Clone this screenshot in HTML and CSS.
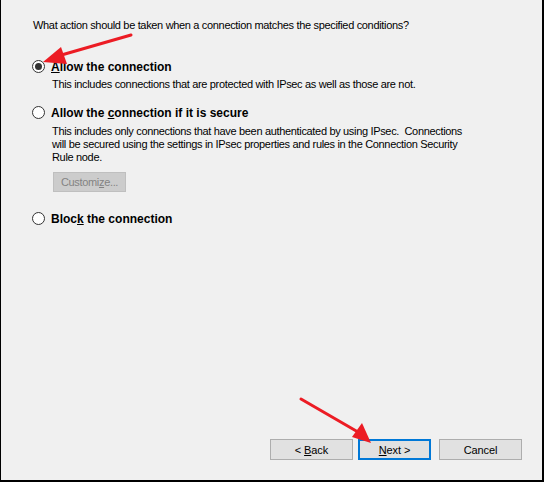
FILE: index.html
```html
<!DOCTYPE html>
<html>
<head>
<meta charset="utf-8">
<link rel="stylesheet" href="styles.css">
</head>
<body>
<div class="dialog">
  <div class="content">
    <p class="question">What action should be taken when a connection matches the specified conditions?</p>

    <div class="option first">
      <span class="radio checked"></span>
      <span class="label"><u>A</u>llow the connection</span>
    </div>
    <p class="desc d1">This includes connections that are protected with IPsec as well as those are not.</p>

    <div class="option second">
      <span class="radio"></span>
      <span class="label">Allow the <u>c</u>onnection if it is secure</span>
    </div>
    <p class="desc d2">This includes only connections that have been authenticated by using IPsec.&nbsp; Connections<br>will be secured using the settings in IPsec properties and rules in the Connection Security<br>Rule node.</p>
    <div class="customize"><span>Customi<u>z</u>e...</span></div>

    <div class="option third">
      <span class="radio"></span>
      <span class="label">Bloc<u>k</u> the connection</span>
    </div>
  </div>

  <div class="footer">
    <div class="btn back"><span>&lt; <u>B</u>ack</span></div>
    <div class="btn next"><span><u>N</u>ext &gt;</span></div>
    <div class="btn cancel"><span>Cancel</span></div>
  </div>

  <svg class="arrows" width="544" height="482" viewBox="0 0 544 482">
    <line x1="131" y1="35" x2="58" y2="56" stroke="#ec1c24" stroke-width="3" stroke-linecap="round"/>
    <polygon points="43,62 61,47 67,64" fill="#ec1c24"/>
    <line x1="301" y1="399" x2="358" y2="432" stroke="#ec1c24" stroke-width="3" stroke-linecap="round"/>
    <polygon points="371,443 352,437 362,423" fill="#ec1c24"/>
  </svg>
</div>
</body>
</html>
```

FILE: styles.css
```css
html, body {
  margin: 0;
  padding: 0;
  background: #f0f0f0;
}

.dialog {
  position: relative;
  box-sizing: border-box;
  width: 544px;
  height: 482px;
  background: #f0f0f0;
  border-left: 1px solid #000;
  border-right: 2px solid #000;
  border-bottom: 2px solid #000;
  display: flex;
  flex-direction: column;
  font-family: "Liberation Sans", Arial, sans-serif;
  font-size: 11px;
  letter-spacing: -0.33px;
  color: #000;
}

.content {
  padding: 18px 20px 0 31px;
}

.question {
  margin: 0 0 0 1px;
  line-height: 15px;
}

.option {
  display: flex;
  align-items: center;
  height: 15px;
}

.option.first { margin-top: 26px; }
.option.second { margin-top: 14px; }
.option.third { margin-top: 19px; }

.radio {
  box-sizing: border-box;
  width: 13px;
  height: 13px;
  border: 1px solid #333;
  border-radius: 50%;
  background: #fff;
  margin-right: 6px;
  display: flex;
  align-items: center;
  justify-content: center;
  flex: none;
}

.radio.checked::after {
  content: "";
  width: 7px;
  height: 7px;
  border-radius: 50%;
  background: #333;
}

.label {
  font-weight: bold;
  font-size: 12px;
  letter-spacing: 0;
}

.desc {
  margin: 0 0 0 20px;
  line-height: 13px;
  white-space: nowrap;
}

.d1 { margin-top: 4px; }
.d2 { margin-top: 5px; }

.customize {
  box-sizing: border-box;
  margin: 8px 0 0 21px;
  width: 73px;
  height: 20px;
  background: #cccccc;
  border: 1px solid #bfbfbf;
  color: #838383;
  display: flex;
  align-items: center;
  justify-content: center;
}

.footer {
  margin-top: auto;
  display: flex;
  justify-content: flex-end;
  padding: 0 20px 20px 0;
}

.btn {
  box-sizing: border-box;
  height: 21px;
  width: 83px;
  background: #e1e1e1;
  border: 1px solid #adadad;
  display: flex;
  align-items: center;
  justify-content: center;
  letter-spacing: -0.1px;
}

.btn.next {
  width: 73px;
  margin-left: 5px;
  border: 2px solid #0078d7;
}

.btn.cancel {
  margin-left: 8px;
}

.arrows {
  position: absolute;
  left: -1px;
  top: 0;
  pointer-events: none;
}
```
